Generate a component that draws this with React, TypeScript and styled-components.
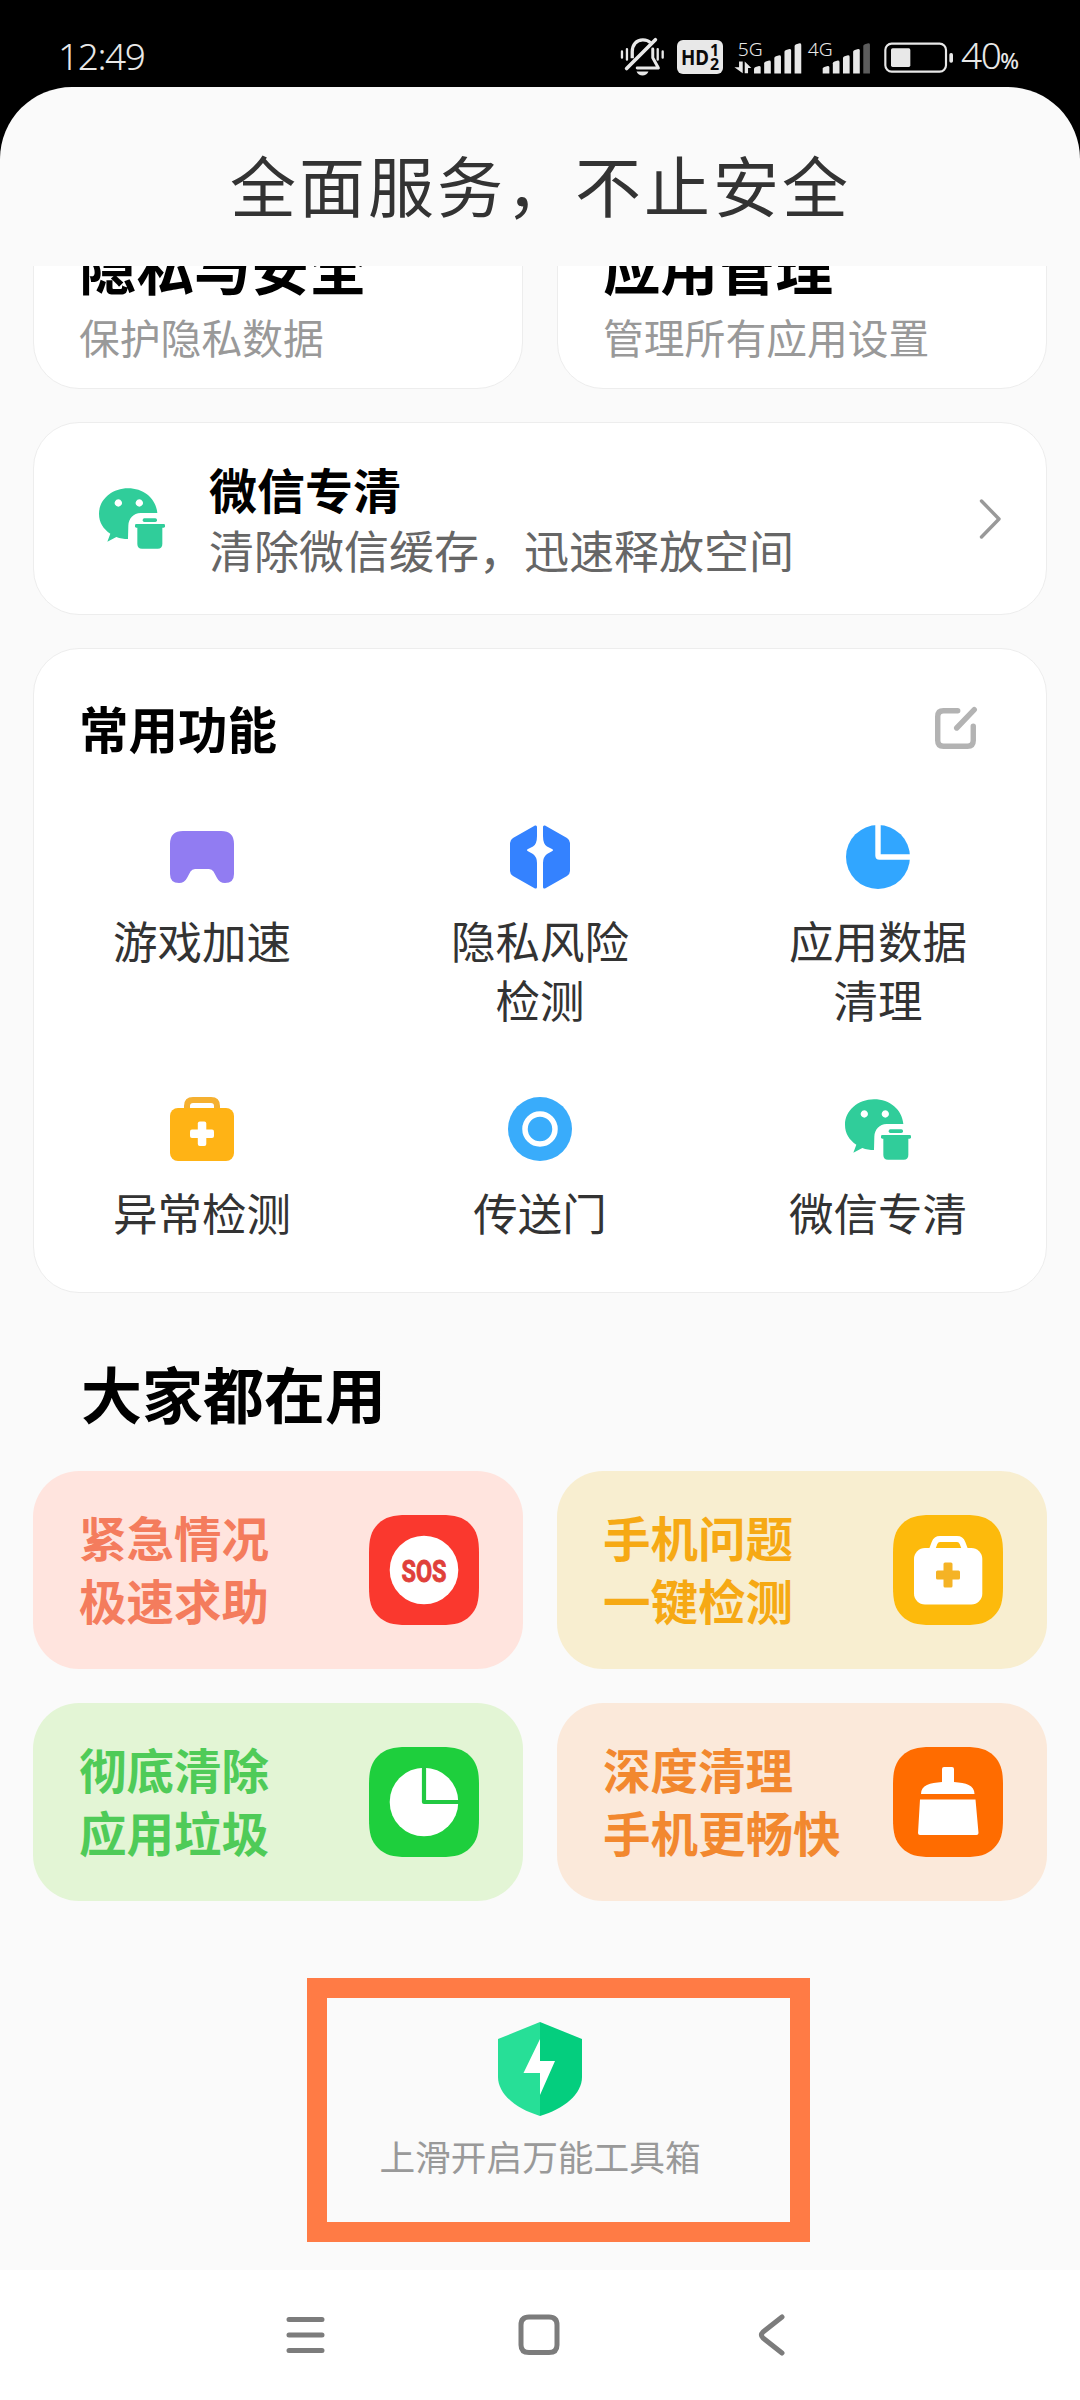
import React from "react";
import styled, { createGlobalStyle } from "styled-components";

const GlobalStyle = createGlobalStyle`
  *, *::before, *::after { box-sizing: border-box; }
  html, body { margin: 0; padding: 0; background: #000; }
  body { font-family: "Noto Sans CJK SC", "Noto Sans", sans-serif; }
  svg { display: block; flex: none; overflow: visible; }
`;

const Screen = styled.div`
  width: 1080px;
  height: 2400px;
  display: flex;
  flex-direction: column;
  background: #000;
  overflow: hidden;
`;

/* ---------- status bar ---------- */
const StatusBar = styled.header`
  height: 87px;
  flex: none;
  display: flex;
  justify-content: space-between;
  padding: 0 61px 0 58px;
  color: #e8e8e8;
  font-family: "Noto Sans", sans-serif;
`;

const Clock = styled.span`
  margin-top: 31px;
  font-size: 37px;
  line-height: 50px;
  font-weight: 300;
  letter-spacing: -1.4px;
`;

const StatusIcons = styled.div`
  display: flex;
  align-items: center;
  height: 40px;
  margin-top: 37px;
`;

const Slot = styled.span<{ $gap: number }>`
  margin-left: ${(p) => p.$gap}px;
  display: flex;
`;

const Percent = styled.span`
  display: flex;
  align-items: baseline;
  margin-left: 7px;
  width: 58px;
  font-size: 37px;
  line-height: 40px;
  font-weight: 300;
  letter-spacing: -1.5px;
  small {
    font-size: 22px;
    font-weight: 500;
  }
`;

/* ---------- page sheet ---------- */
const Sheet = styled.main`
  height: 2183px;
  flex: none;
  display: flex;
  flex-direction: column;
  background: #fafafa;
  border-radius: 72px 72px 0 0;
`;

const PageTitle = styled.h1`
  margin: 0;
  height: 179px;
  flex: none;
  padding-top: 54px;
  text-align: center;
  font-size: 66px;
  line-height: 84px;
  font-weight: 400;
  letter-spacing: 3px;
  text-indent: 1px;
  color: #333;
`;

const Scroller = styled.div`
  flex: 1;
  min-height: 0;
  display: flex;
  flex-direction: column;
  overflow: hidden;
  padding: 0 33px;
`;

const Card = styled.section`
  flex: none;
  background: #fff;
  border: 1px solid #ededed;
  border-radius: 46px;
`;

const TopRow = styled.div`
  display: grid;
  grid-template-columns: 490px 490px;
  gap: 34px;
  margin-top: -72px;
  flex: none;
`;

const FeatureCard = styled(Card)`
  height: 195px;
  display: flex;
  flex-direction: column;
  justify-content: flex-end;
  padding: 0 0 27px 45px;
`;

const FeatureTitle = styled.h2`
  margin: 0 0 18px;
  font-size: 57.5px;
  line-height: 60px;
  font-weight: 700;
  color: #000;
`;

const FeatureNote = styled.p`
  margin: 0;
  font-size: 40.8px;
  line-height: 48px;
  color: #999;
`;

const CleanCard = styled(Card)`
  height: 193px;
  margin-top: 33px;
  display: flex;
  align-items: center;
  padding: 0 45px 0 65px;
`;

const CleanText = styled.div`
  flex: 1;
  margin-left: 44px;
  line-height: 61px;
`;

const CleanTitle = styled.h2`
  margin: 0;
  font-size: 48px;
  line-height: 61px;
  font-weight: 700;
  color: #000;
`;

const CleanNote = styled.p`
  margin: 0;
  font-size: 45px;
  line-height: 61px;
  color: #666;
`;

const ToolsCard = styled(Card)`
  height: 645px;
  margin-top: 33px;
`;

const ToolsHead = styled.div`
  height: 157px;
  display: flex;
  align-items: center;
  justify-content: space-between;
  padding: 0 68px 0 45px;
`;

const ToolsTitle = styled.h2`
  margin: 0;
  font-size: 49.5px;
  line-height: 60px;
  font-weight: 700;
  color: #000;
`;

const ToolsGrid = styled.div`
  display: grid;
  grid-template-columns: repeat(3, 1fr);
  grid-auto-rows: 272px;
  padding-top: 16px;
  margin: 0 -1px;
`;

const Tool = styled.div`
  display: flex;
  flex-direction: column;
  align-items: center;
`;

const ToolIcon = styled.div`
  height: 70px;
  display: flex;
  align-items: center;
`;

const ToolLabel = styled.span`
  width: 184px;
  margin-top: 19px;
  text-align: center;
  font-size: 44.5px;
  line-height: 58.5px;
  color: #333;
`;

const SectionTitle = styled.h2`
  margin: 0;
  height: 178px;
  flex: none;
  display: flex;
  align-items: center;
  padding: 21px 0 0 48px;
  font-size: 61px;
  line-height: 80px;
  font-weight: 700;
  color: #000;
`;

const PromoGrid = styled.div`
  flex: none;
  display: grid;
  grid-template-columns: 490px 490px;
  grid-auto-rows: 198px;
  gap: 34px;
`;

const Promo = styled.div<{ $bg: string; $fg: string }>`
  display: flex;
  align-items: center;
  justify-content: space-between;
  padding: 0 44px 0 46px;
  border-radius: 46px;
  background: ${(p) => p.$bg};
  color: ${(p) => p.$fg};
  font-size: 47.5px;
  line-height: 63px;
  font-weight: 700;
  white-space: pre-line;

  span {
    margin-top: -4px;
  }
`;

const Footer = styled.footer`
  position: relative;
  flex: 1;
  display: flex;
  flex-direction: column;
  align-items: center;
  padding-top: 121px;
`;

const FooterText = styled.span`
  margin-top: 20px;
  font-size: 35.7px;
  line-height: 40px;
  color: #999;
`;

const Highlight = styled.div`
  position: absolute;
  left: 274px;
  top: 77px;
  width: 503px;
  height: 264px;
  border: 20px solid #ff7b45;
`;

/* ---------- navigation ---------- */
const NavBar = styled.nav`
  flex: 1;
  display: flex;
  justify-content: center;
  gap: 173px;
  padding: 34px 2px 0 0;
  background: #fff;
`;

/* ---------- drawings ---------- */
const MuteIcon = () => (
  <svg width="45" height="40" viewBox="58 54 136 120" fill="none" stroke="#e8e8e8" strokeLinecap="round">
    <path d="M95 118V98C95 76 108 62 127 62C137 62 145 65 150 71" strokeWidth="10" strokeLinecap="butt" />
    <path d="M157 90V116L174 147H110" strokeWidth="9" strokeLinejoin="round" />
    <path d="M78 149L165 62" strokeWidth="11" />
    <path d="M108 158H144C138 174 114 174 108 158Z" fill="#e8e8e8" stroke="none" />
    <path d="M64 97V116M79 90V122M172 90V122M187 97V116" strokeWidth="7" />
  </svg>
);

const HdIcon = () => (
  <svg width="46" height="34" viewBox="0 0 46 34" fontFamily="Noto Sans, sans-serif" fontWeight="700" fill="#0a0a0a">
    <rect width="46" height="34" rx="6" fill="#e8e8e8" />
    <text x="4" y="24.500" fontSize="21" textLength="28" lengthAdjust="spacingAndGlyphs">HD</text>
    <text x="33" y="15.500" fontSize="16">1</text>
    <text x="33" y="30" fontSize="16">2</text>
  </svg>
);

const barTops = [135, 119, 103, 84, 67];

const Signal = ({ label, x, barX, dimLast, arrows }: { label: string; x: number; barX: number; dimLast?: boolean; arrows?: boolean }) => (
  <svg width={(barX + 144 - x) / 3} height="34.6" viewBox={`${x} 57 ${barX + 144 - x} 104`} fill="#e8e8e8">
    <text x={arrows ? 412 : x - 1} y="106" fontSize="56" fontWeight="300" textLength="75" lengthAdjust="spacingAndGlyphs" fontFamily="Noto Sans, sans-serif">
      {label}
    </text>
    {arrows && <path d="M416 122H427V157L402 139H416ZM433 122L453 141H443V157H433Z" />}
    {barTops.map((top, i) => (
      <path
        key={top}
        d={`M${barX + i * 30.5} ${top + 8}Q${barX + i * 30.5} ${top + 5} ${barX + i * 30.5 + 5} ${top + 3}L${barX + i * 30.5 + 15} ${top}Q${barX + i * 30.5 + 20} ${top} ${barX + i * 30.5 + 20} ${top + 4}V158H${barX + i * 30.5}Z`}
        fill={dimLast && i === 4 ? "#5c5c5c" : "#e8e8e8"}
      />
    ))}
  </svg>
);

const BatteryIcon = () => (
  <svg width="70" height="31" viewBox="851 64 210 93">
    <rect x="855" y="69" width="182" height="84" rx="19" fill="none" stroke="#e8e8e8" strokeWidth="6.5" />
    <rect x="872" y="83" width="58" height="56" rx="5" fill="#e8e8e8" />
    <rect x="1047" y="97" width="11" height="29" rx="5" fill="#e8e8e8" />
  </svg>
);

const WechatClean = () => (
  <svg width="66" height="61" viewBox="45 40 198 183" fill="#30cd9a">
    <path
      fillRule="evenodd"
      d="M220 115C216 72 180 41 132 41C84 41 45 75 45 117C45 143 58 163 79 177L70 201L97 187C108 191 120 193 132 193L133 153C134 131 148 116 170 115ZM103 74A11 11 0 1 1 102.9 74ZM166 74A11 11 0 1 1 165.9 74Z"
    />
    <rect x="176" y="131" width="43" height="11" rx="5" />
    <rect x="153" y="148" width="90" height="11" rx="4" />
    <path d="M160 155H235V208Q235 222 221 222H174Q160 222 160 208Z" />
  </svg>
);

const Chevron = () => (
  <svg width="22" height="40" viewBox="0 0 22 40" fill="none" stroke="#999" strokeWidth="3.4" strokeLinecap="round" strokeLinejoin="round">
    <path d="M2.5 2L20 20L2.5 38" />
  </svg>
);

const EditIcon = () => (
  <svg width="44" height="44" viewBox="45 45 130 130" fill="none" stroke="#b3b3b3" strokeWidth="16" strokeLinecap="round" strokeLinejoin="round">
    <path d="M115 59H73Q56 59 56 76V147Q56 164 73 164H144Q161 164 161 147V105" />
    <path d="M112 110L164 56" />
  </svg>
);

const GameIcon = () => (
  <svg width="64" height="52" viewBox="0 0 64 52">
    <path
      fill="#917cf2"
      d="M13 0H51Q64 0 64 13V43Q64 52 55 52Q49.5 52 47 47L43.5 40.5Q42 38 39 38H25Q22 38 20.500 40.500L17 47Q14.500 52 9 52Q0 52 0 43V13Q0 0 13 0Z"
    />
  </svg>
);

const halfHex = "M25 .6Q27 0 27 2V11Q27 19 23 21.500L18 24Q16 25 18 26.300L23 29Q27 32 27 38V62Q27 64 25 63.400L3 51Q0 49 0 46V18Q0 15 3 13Z";

const PrivacyIcon = () => (
  <svg width="60" height="64" viewBox="0 0 60 64" fill="#3482ff">
    <path d={halfHex} />
    <path d={halfHex} transform="translate(60 0) scale(-1 1)" />
  </svg>
);

const DataIcon = () => (
  <svg width="64" height="64" viewBox="0 0 64 64">
    <circle cx="32" cy="32" r="32" fill="#31a6ff" />
    <path d="M32 -1V30.500Q32 32 33.500 32H65" fill="none" stroke="#fff" strokeWidth="5.4" />
  </svg>
);

const KitIcon = () => (
  <svg width="64" height="64" viewBox="0 0 64 64">
    <path d="M17 13V9Q17 3 23 3H41Q47 3 47 9V13" fill="none" stroke="#f5b030" strokeWidth="6" />
    <rect y="11" width="64" height="53" rx="8" fill="#ffb315" />
    <rect x="20" y="32.500" width="24" height="8.500" rx="2" fill="#fff" />
    <rect x="27.800" y="24.500" width="8.500" height="24.500" rx="2" fill="#fff" />
  </svg>
);

const PortalIcon = () => (
  <svg width="64" height="64" viewBox="0 0 64 64">
    <circle cx="32" cy="32" r="32" fill="#39acfb" />
    <circle cx="32" cy="32" r="15" fill="none" stroke="#fff" strokeWidth="5.500" />
  </svg>
);

const PromoTile = ({ color, children }: { color: string; children: React.ReactNode }) => (
  <svg width="110" height="110" viewBox="0 0 110 110">
    <path
      fill={color}
      d="M38 0H72C86 0 94 2 101 9C108 16 110 24 110 38V72C110 86 108 94 101 101C94 108 86 110 72 110H38C24 110 16 108 9 101C2 94 0 86 0 72V38C0 24 2 16 9 9C16 2 24 0 38 0Z"
    />
    {children}
  </svg>
);

const SosTile = () => (
  <PromoTile color="#fa382e">
    <circle cx="55" cy="55" r="34.300" fill="#fff" />
    <text x="32.500" y="66.600" fontSize="32" fontWeight="700" fontFamily="Roboto, sans-serif" fill="#e0403a" stroke="#e0403a" strokeWidth="0.9" textLength="45" lengthAdjust="spacingAndGlyphs">
      SOS
    </text>
  </PromoTile>
);

const KitTile = () => (
  <PromoTile color="#fdba0c">
    <path d="M38.500 36L41.500 28Q43 24 47 24H64Q68 24 69.500 28L72.500 36" fill="none" stroke="#fff" strokeWidth="6" />
    <rect x="21" y="33" width="68.300" height="56.500" rx="11" fill="#fff" />
    <rect x="43" y="55.500" width="24" height="9" rx="1.500" fill="#f5b325" />
    <rect x="50.500" y="47.500" width="9" height="25" rx="1.500" fill="#f5b325" />
  </PromoTile>
);

const PieTile = () => (
  <PromoTile color="#1ecf3d">
    <circle cx="55" cy="55" r="34.300" fill="#fff" />
    <path d="M55 19V55H91" fill="none" stroke="#22c942" strokeWidth="4.200" strokeLinejoin="round" />
  </PromoTile>
);

const BrushTile = () => (
  <PromoTile color="#ff6c00">
    <path
      fill="#fff"
      d="M49 22Q49 20 51 20H59Q61 20 61 22V35C73 36 81.500 38 81.500 47H28C28 38 37 36 49 35ZM27 52.500H82.500L85.500 86Q85.500 88 83.500 88H27Q25 88 25 86Z"
    />
  </PromoTile>
);

const ShieldIcon = () => (
  <svg width="84" height="94" viewBox="0 0 84 94">
    <path d="M42 0L0 17V55C0 72 18 87 42 94Z" fill="#27df97" />
    <path d="M42 0L84 17V55C84 72 66 87 42 94Z" fill="#04ce7e" />
    <path d="M42 17V39H57L42 73V51H25.500Z" fill="#fff" />
  </svg>
);

const NavIcon = ({ d }: { d: string }) => (
  <svg width="60" height="62" viewBox="0 0 60 62" fill="none" stroke="#7c7c7c" strokeWidth="5" strokeLinecap="round" strokeLinejoin="round">
    <path d={d} />
  </svg>
);

/* ---------- data ---------- */
const tools = [
  { label: "游戏加速", Icon: GameIcon },
  { label: "隐私风险检测", Icon: PrivacyIcon },
  { label: "应用数据清理", Icon: DataIcon },
  { label: "异常检测", Icon: KitIcon },
  { label: "传送门", Icon: PortalIcon },
  { label: "微信专清", Icon: WechatClean },
];

const promos = [
  { text: "紧急情况\n极速求助", bg: "#ffe4de", fg: "#f47c5d", Tile: SosTile },
  { text: "手机问题\n一键检测", bg: "#f8eed0", fg: "#f6a914", Tile: KitTile },
  { text: "彻底清除\n应用垃圾", bg: "#e3f5d5", fg: "#4fcb58", Tile: PieTile },
  { text: "深度清理\n手机更畅快", bg: "#fbe9da", fg: "#f2882f", Tile: BrushTile },
];

export default function App() {
  return (
    <Screen>
      <GlobalStyle />
      <StatusBar>
        <Clock>12:49</Clock>
        <StatusIcons>
          <MuteIcon />
          <Slot $gap={12}><HdIcon /></Slot>
          <Slot $gap={11}><Signal label="5G" x={401} barX={461} arrows /></Slot>
          <Slot $gap={6}><Signal label="4G" x={623} barX={667} dimLast /></Slot>
          <Slot $gap={13}><BatteryIcon /></Slot>
          <Percent>40<small>%</small></Percent>
        </StatusIcons>
      </StatusBar>

      <Sheet>
        <PageTitle>全面服务，不止安全</PageTitle>
        <Scroller>
          <TopRow>
            <FeatureCard>
              <FeatureTitle>隐私与安全</FeatureTitle>
              <FeatureNote>保护隐私数据</FeatureNote>
            </FeatureCard>
            <FeatureCard>
              <FeatureTitle>应用管理</FeatureTitle>
              <FeatureNote>管理所有应用设置</FeatureNote>
            </FeatureCard>
          </TopRow>

          <CleanCard>
            <WechatClean />
            <CleanText>
              <CleanTitle>微信专清</CleanTitle>
              <CleanNote>清除微信缓存，迅速释放空间</CleanNote>
            </CleanText>
            <Chevron />
          </CleanCard>

          <ToolsCard>
            <ToolsHead>
              <ToolsTitle>常用功能</ToolsTitle>
              <EditIcon />
            </ToolsHead>
            <ToolsGrid>
              {tools.map(({ label, Icon }) => (
                <Tool key={label}>
                  <ToolIcon><Icon /></ToolIcon>
                  <ToolLabel>{label}</ToolLabel>
                </Tool>
              ))}
            </ToolsGrid>
          </ToolsCard>

          <SectionTitle>大家都在用</SectionTitle>
          <PromoGrid>
            {promos.map(({ text, bg, fg, Tile }) => (
              <Promo key={text} $bg={bg} $fg={fg}>
                <span>{text}</span>
                <Tile />
              </Promo>
            ))}
          </PromoGrid>

          <Footer>
            <ShieldIcon />
            <FooterText>上滑开启万能工具箱</FooterText>
            <Highlight />
          </Footer>
        </Scroller>
      </Sheet>

      <NavBar>
        <NavIcon d="M13 15.500H46M13 31H46M13 46.500H46" />
        <NavIcon d="M20 13H40Q48 13 48 21V41Q48 48.500 40 48.500H20Q12 48.500 12 41V21Q12 13 20 13Z" />
        <NavIcon d="M40 13L21 28Q18 31 21 34L40 49" />
      </NavBar>
    </Screen>
  );
}
